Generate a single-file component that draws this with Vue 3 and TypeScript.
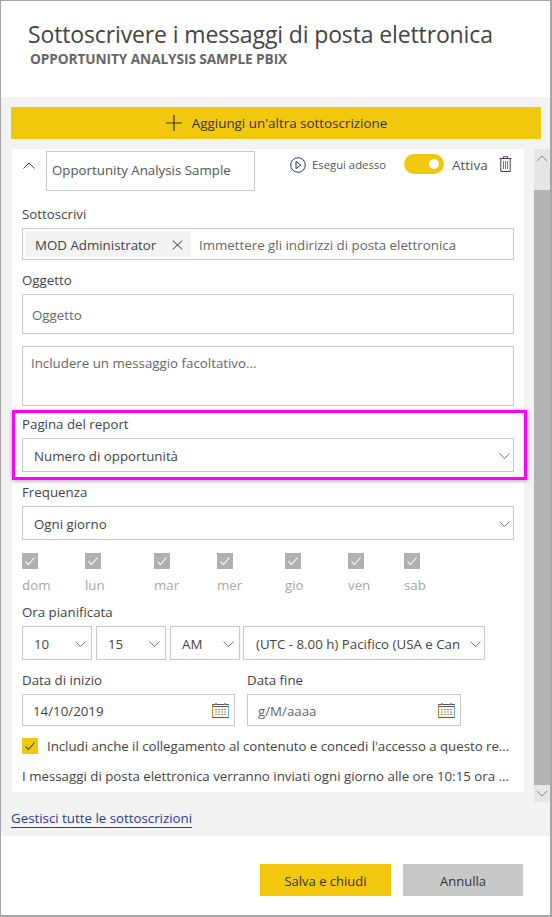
<script setup lang="ts">
const days = [
  { label: 'dom', width: 63 },
  { label: 'lun', width: 69 },
  { label: 'mar', width: 63 },
  { label: 'mer', width: 68 },
  { label: 'gio', width: 63 },
  { label: 'ven', width: 56 },
  { label: 'sab', width: 40 }
]
const timeSelects = [
  { value: '10', cls: 'time-short' },
  { value: '15', cls: 'time-short' },
  { value: 'AM', cls: 'time-short' },
  { value: '(UTC - 8.00 h) Pacifico (USA e Can', cls: 'time-zone' }
]
</script>

<template>
  <div class="dialog">
    <header class="head">
      <h1>Sottoscrivere i messaggi di posta elettronica</h1>
      <h2>OPPORTUNITY ANALYSIS SAMPLE PBIX</h2>
    </header>

    <section class="body">
      <button class="add">
        <svg width="18" height="18" viewBox="0 0 18 18"><path d="M9 1v16M1 9h16" stroke="#333" stroke-width="1.2" fill="none" /></svg>
        <span>Aggiungi un'altra sottoscrizione</span>
      </button>

      <div class="scroller">
        <div class="card">
          <div class="top">
            <svg class="collapse" width="12" height="7" viewBox="0 0 12 7"><path d="M.5 6.500l5.500-5.500 5.500 5.500" stroke="#3b4a6b" stroke-width="1" fill="none" /></svg>
            <div class="name">Opportunity Analysis Sample</div>
            <svg class="play" width="16" height="16" viewBox="0 0 16 16">
              <circle cx="8" cy="8" r="7.300" stroke="#2b3a5c" fill="none" />
              <path d="M6 4.400l4.800 3.600L6 11.600z" stroke="#2b3a5c" fill="none" />
            </svg>
            <span class="run">Esegui adesso</span>
            <span class="toggle"><i></i></span>
            <span class="active">Attiva</span>
            <svg class="trash" width="13" height="16" viewBox="0 0 13 16">
              <path d="M.5 2.500h12M4.500 2.500V.7h4v1.800M1.800 2.500v13h9.400v-13" stroke="#4a3a5c" fill="none" />
              <path d="M4.500 5v8M6.500 5v8M8.500 5v8" stroke="#5e8a4e" fill="none" />
            </svg>
          </div>

          <label class="lbl first">Sottoscrivi</label>
          <div class="box to">
            <span class="chip">
              MOD Administrator
              <svg width="11" height="10" viewBox="0 0 11 10"><path d="M.7.5l9.600 9M10.300.5L.7 9.500" stroke="#333" fill="none" /></svg>
            </span>
            <span class="ph">Immettere gli indirizzi di posta elettronica</span>
          </div>

          <label class="lbl">Oggetto</label>
          <div class="box subject"><span class="ph">Oggetto</span></div>

          <div class="box note"><span class="ph">Includere un messaggio facoltativo...</span></div>

          <label class="lbl page-lbl">Pagina del report</label>
          <div class="box sel">
            <span>Numero di opportunità</span>
            <svg width="11" height="6" viewBox="0 0 11 6"><path d="M.5.5l5 5 5-5" stroke="#777" fill="none" /></svg>
          </div>

          <label class="lbl">Frequenza</label>
          <div class="box sel">
            <span>Ogni giorno</span>
            <svg width="11" height="6" viewBox="0 0 11 6"><path d="M.5.5l5 5 5-5" stroke="#777" fill="none" /></svg>
          </div>

          <div class="days">
            <div v-for="d in days" :key="d.label" class="day" :style="{ width: d.width + 'px' }">
              <span class="tick">
                <svg width="12" height="10" viewBox="0 0 12 10"><path d="M1.500 5.500l3 3 6-7" stroke="#fff" stroke-width="1.100" fill="none" /></svg>
              </span>
              <span class="day-name">{{ d.label }}</span>
            </div>
          </div>

          <label class="lbl time-lbl">Ora pianificata</label>
          <div class="times">
            <div v-for="t in timeSelects" :key="t.value" class="box time" :class="t.cls">
              <span class="time-val">{{ t.value }}</span>
              <svg width="11" height="6" viewBox="0 0 11 6"><path d="M.5.5l5 5 5-5" stroke="#777" fill="none" /></svg>
            </div>
          </div>

          <div class="dates">
            <div class="date-col start">
              <label class="lbl">Data di inizio</label>
              <div class="box date">
                <span>14/10/2019</span>
                <svg width="17" height="15" viewBox="0 0 17 15">
                  <rect x=".5" y="1.500" width="16" height="13" fill="#fff" stroke="#555" />
                  <path d="M.5 1.500v13" stroke="#c8862e" />
                  <path d="M16.500 1.500v13" stroke="#6aaeea" />
                  <path d="M1 3.500h15" stroke="#555" stroke-width="1" />
                  <path d="M4 0v2M13 0v2" stroke="#6b84a8" stroke-width="1.500" />
                  <path d="M3 6.500h11M3 9h11M3 11.500h11" stroke="#b08a50" stroke-dasharray="2 1" />
                </svg>
              </div>
            </div>
            <div class="date-col end">
              <label class="lbl">Data fine</label>
              <div class="box date">
                <span class="ph">g/M/aaaa</span>
                <svg width="17" height="15" viewBox="0 0 17 15">
                  <rect x=".5" y="1.500" width="16" height="13" fill="#fff" stroke="#555" />
                  <path d="M.5 1.500v13" stroke="#c8862e" />
                  <path d="M16.500 1.500v13" stroke="#6aaeea" />
                  <path d="M1 3.500h15" stroke="#555" stroke-width="1" />
                  <path d="M4 0v2M13 0v2" stroke="#6b84a8" stroke-width="1.500" />
                  <path d="M3 6.500h11M3 9h11M3 11.500h11" stroke="#b08a50" stroke-dasharray="2 1" />
                </svg>
              </div>
            </div>
          </div>

          <div class="include">
            <span class="tick on">
              <svg width="12" height="10" viewBox="0 0 12 10"><path d="M1.500 5.500l3 3 6-7" stroke="#3f4a1c" stroke-width="1.100" fill="none" /></svg>
            </span>
            <span class="line">Includi anche il collegamento al contenuto e concedi l'accesso a questo re...</span>
          </div>
          <p class="summary line">I messaggi di posta elettronica verranno inviati ogni giorno alle ore 10:15 ora ...</p>

          <div class="highlight"></div>
        </div>

        <div class="scrollbar">
          <span class="arrow up">
            <svg width="12" height="7" viewBox="0 0 12 7"><path d="M1 6l5-5 5 5" stroke="#8a8a8a" fill="none" /></svg>
          </span>
          <span class="thumb"></span>
          <span class="arrow down">
            <svg width="12" height="7" viewBox="0 0 12 7"><path d="M1 1l5 5 5-5" stroke="#8a8a8a" fill="none" /></svg>
          </span>
        </div>
      </div>

      <a class="manage">Gestisci tutte le sottoscrizioni</a>
    </section>

    <footer class="foot">
      <button class="btn save">Salva e chiudi</button>
      <button class="btn cancel">Annulla</button>
    </footer>
  </div>
</template>

<style>
html, body { margin: 0; background: #fff; }
</style>

<style scoped>
.dialog {
  box-sizing: border-box;
  width: 552px;
  height: 917px;
  border: 1px solid #a6a6a6;
  border-width: 1px 2px 2px 1px;
  background: #fff;
  color: #3a3a3a;
  font-family: "Open Sans", "Liberation Sans", sans-serif;
  font-size: 13.3px;
  display: flex;
  flex-direction: column;
}
.head { height: 96px; box-sizing: border-box; padding: 18px 0 0 27px; }
h1 { margin: 0; font-weight: 400; font-size: 23px; line-height: 30px; color: #444; letter-spacing: -.13px; }
h2 { margin: 1px 0 0 2px; font-weight: 700; font-size: 13.7px; line-height: 17px; color: #666; letter-spacing: -.1px; }

.body { height: 739px; background: #f3f3f3; padding: 10px 0 0 10px; box-sizing: border-box; }
.add {
  display: flex; align-items: center; justify-content: center; gap: 9px;
  width: 530px; height: 32px; border: 0; padding: 0;
  background: #f2c80f; color: #333;
  font: 13.4px "Open Sans", sans-serif;
}
.scroller { display: flex; margin-top: 10px; }
.card {
  position: relative; width: 512px; height: 643px; margin-left: 1px;
  background: #fff; padding: 2px 10px 0; box-sizing: border-box;
}
.top { display: flex; align-items: flex-start; height: 40px; }
.collapse { margin: 11px 0 0 1px; }
.name {
  box-sizing: border-box; width: 209px; height: 40px; margin-left: 11px;
  border: 1px solid #c8c8c8; padding: 9px 5px; white-space: nowrap;
  line-height: 18px; color: #555;
}
.play { margin: 6px 0 0 35px; }
.run { margin: 5px 0 0 6px; font-size: 11.300px; line-height: 17px; color: #555; white-space: nowrap; }
.toggle {
  position: relative; width: 40px; height: 20px; margin: 3px 0 0 18px;
  border-radius: 10px; background: #f2c80f;
}
.toggle i {
  position: absolute; right: 5px; top: 5px;
  width: 10px; height: 10px; border-radius: 50%; background: #fff;
}
.active { margin: 4px 0 0 8px; font-size: 13.500px; line-height: 20px; color: #555; }
.trash { margin: 5px 0 0 11px; }

.lbl { display: block; line-height: 18px; color: #444; margin-top: 11px; white-space: nowrap; }
.lbl.first { margin-top: 14px; }
.box { box-sizing: border-box; border: 1px solid #c8c8c8; background: #fff; }
.ph { color: #666; }
.to { display: flex; align-items: center; height: 32px; margin-top: 5px; padding-left: 2px; gap: 8px; }
.to .ph { padding-top: 2px; }
.chip {
  display: flex; align-items: center; justify-content: space-between;
  box-sizing: border-box; width: 166px; height: 26px; padding: 2px 8px 0 10px;
  background: #f3f3f3; white-space: nowrap; color: #444;
}
.subject { height: 40px; margin-top: 5px; padding: 11px 9px; line-height: 18px; }
.note { height: 60px; margin-top: 12px; padding: 7px 8px; line-height: 18px; }
.page-lbl { margin-top: 9px; }
.sel {
  display: flex; align-items: center; justify-content: space-between;
  height: 34px; margin-top: 5px; padding: 2px 3px 0 11px; color: #444;
}
.days { display: flex; margin-top: 13px; }
.day { display: flex; flex-direction: column; flex: none; }
.tick {
  display: flex; align-items: center; justify-content: center;
  width: 16px; height: 16px; background: #b0b0b0;
}
.tick.on { background: #f2c80f; }
.day-name { margin-top: 7px; line-height: 18px; color: #a6a6a6; }
.lbl.time-lbl { margin-top: 9px; }
.times { display: flex; gap: 4px; margin-top: 5px; }
.time {
  display: flex; align-items: center; justify-content: space-between;
  height: 34px; padding: 2px 5px 0 11px; color: #444;
}
.time-short { width: 70px; }
.time-zone { width: 242px; margin-left: -1px; padding: 2px 3px 0 12px; }
.time-val { white-space: nowrap; }
.dates { display: flex; gap: 12px; margin-top: 11px; }
.date-col .lbl { margin-top: 0; }
.start { width: 213px; }
.end { width: 214px; }
.date {
  display: flex; align-items: center; justify-content: space-between;
  height: 32px; margin-top: 5px; padding: 0 5px 0 10px; color: #444;
}
.date span { padding-top: 2px; }
.include { display: flex; align-items: center; gap: 9px; margin-top: 12px; height: 16px; color: #444; letter-spacing: -.04px; }
.line { white-space: nowrap; }
.summary { margin: 13px 0 0; line-height: 18px; color: #444; }
.highlight {
  position: absolute; left: 0; top: 261px;
  box-sizing: border-box; width: 515px; height: 70px;
  border: 3px solid #ff00ff;
  box-shadow: 0 1px 4px rgba(0, 0, 0, .35);
  pointer-events: none;
}

.scrollbar { display: flex; flex-direction: column; width: 16px; height: 653px; margin-left: 10px; background: #f0f0f0; }
.arrow { display: flex; align-items: center; justify-content: center; height: 41px; background: #e6e6e6; }
.arrow.up { align-items: flex-start; padding-top: 6px; height: 35px; }
.arrow.down { height: 17px; }
.thumb { flex: 1; background: #b3b3b3; }

.manage {
  display: inline-block; margin: 7px 0 0 0;
  line-height: 18px; color: #2b3a8c;
  border-bottom: 1px solid #2b3a8c;
}
.foot {
  flex: 1; display: flex; justify-content: flex-end; gap: 12px;
  padding: 28px 27px 0 0;
}
.btn { width: 131px; height: 32px; border: 0; padding: 2px 0 0; font: 13px "Open Sans", sans-serif; color: #333; }
.save { background: #f2c80f; }
.cancel { width: 120px; background: #c8c8c8; }
</style>
